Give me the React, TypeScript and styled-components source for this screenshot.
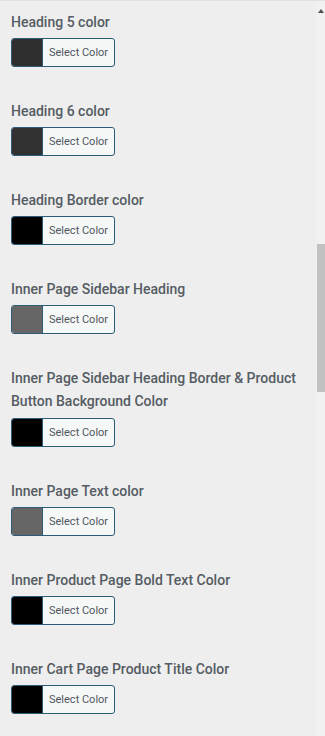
import React from 'react';
import styled, { createGlobalStyle } from 'styled-components';

interface ColorSetting {
    label: string;
    color: string;
}

const settings: ColorSetting[] = [
    { label: 'Heading 5 color', color: '#2f2f2f' },
    { label: 'Heading 6 color', color: '#313131' },
    { label: 'Heading Border color', color: '#000000' },
    { label: 'Inner Page Sidebar Heading', color: '#666666' },
    { label: 'Inner Page Sidebar Heading Border & Product Button Background Color', color: '#000000' },
    { label: 'Inner Page Text color', color: '#666666' },
    { label: 'Inner Product Page Bold Text Color', color: '#000000' },
    { label: 'Inner Cart Page Product Title Color', color: '#000000' },
];

const GlobalStyle = createGlobalStyle`
    html, body {
        margin: 0;
        padding: 0;
        background: #eeeeee;
        overflow: hidden;
    }
`;

const Page = styled.div`
    display: flex;
    height: 736px;
    background: #eeeeee;
    border-top: 1px solid #e2e0da;
    box-sizing: border-box;
    font-family: Roboto, 'Liberation Sans', sans-serif;
`;

const Content = styled.div`
    flex: 1;
    padding: 8px 8px 0 11px;
    overflow: hidden;
`;

const Setting = styled.div`
    margin-bottom: 31px;
`;

const Label = styled.div`
    font-size: 14px;
    font-weight: 500;
    line-height: 23.5px;
    color: #555c63;
    padding-top: 1px;
    margin-bottom: 4px;

    &:first-line {
        line-height: 24px;
    }
`;

const PickerButton = styled.button`
    display: flex;
    align-items: stretch;
    height: 29px;
    padding: 0;
    border: 1px solid #2b5d79;
    border-radius: 3px;
    background: #f6f7f7;
    overflow: hidden;
    cursor: pointer;
`;

const Swatch = styled.span<{ $color: string }>`
    width: 30px;
    background: ${(p) => p.$color};
    border-right: 1px solid #2b5d79;
`;

const ButtonText = styled.span`
    display: flex;
    align-items: center;
    padding: 0 6px 0 6px;
    font-family: Roboto, 'Liberation Sans', sans-serif;
    font-size: 11px;
    color: #50575e;
`;

const Scrollbar = styled.div`
    width: 9px;
    display: flex;
    flex-direction: column;
    align-items: flex-end;
    background: #f1f1f1;
`;

const Arrow = styled.div`
    width: 0;
    height: 0;
    margin: 8px 1px 0 0;
    border-left: 3px solid transparent;
    border-right: 3px solid transparent;
    border-bottom: 4px solid #505050;
`;

const Thumb = styled.div`
    width: 8px;
    height: 148px;
    margin-top: 231px;
    background: #c1c1c1;
`;

const App: React.FC = () => {
    return (
        <Page>
            <GlobalStyle />
            <Content>
                {settings.map((s) => (
                    <Setting key={s.label}>
                        <Label>{s.label}</Label>
                        <PickerButton type="button">
                            <Swatch $color={s.color} />
                            <ButtonText>Select Color</ButtonText>
                        </PickerButton>
                    </Setting>
                ))}
            </Content>
            <Scrollbar>
                <Arrow />
                <Thumb />
            </Scrollbar>
        </Page>
    );
};

export default App;
